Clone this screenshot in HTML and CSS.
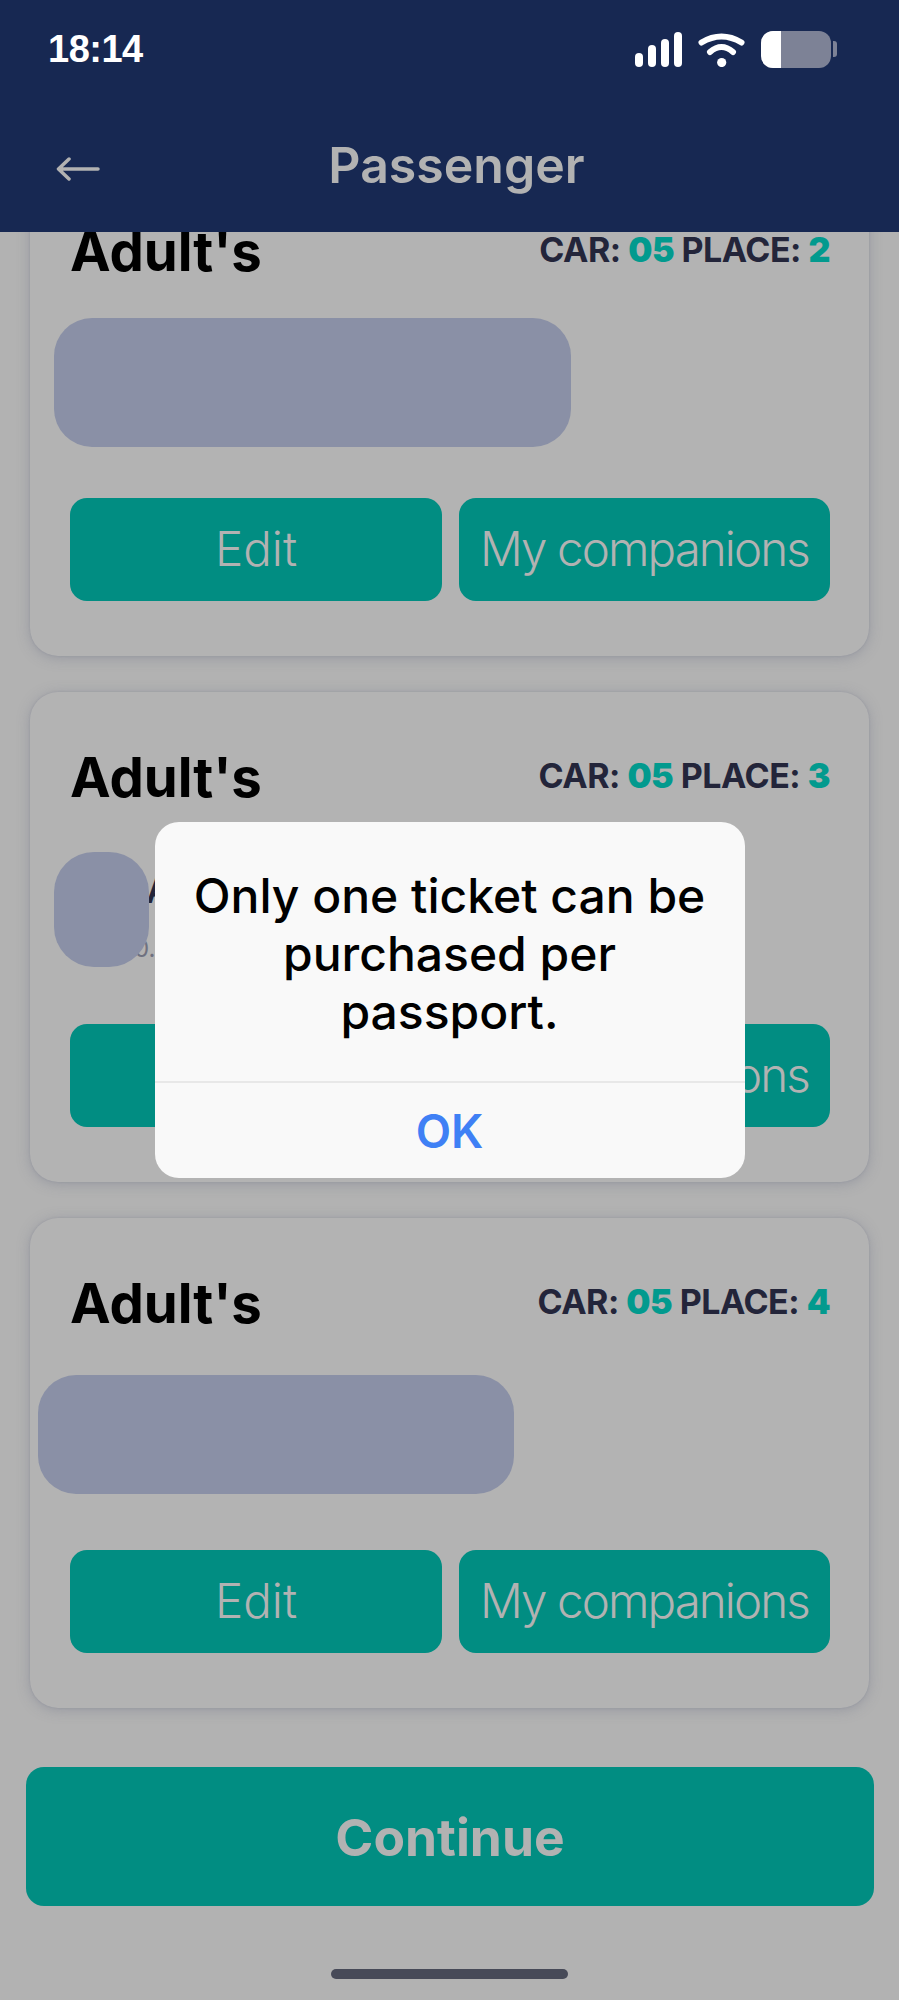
FILE: index.html
```html
<!DOCTYPE html>
<html lang="en">

<head>
  <meta charset="UTF-8">
  <meta name="viewport" content="width=device-width, initial-scale=1.0">
  <title>Passenger</title>
  <link rel="stylesheet" href="styles.css">
</head>

<body>
  <div id="app">
    <header class="top-bar">
      <div class="status-bar">
        <span class="status-time">18:14</span>
        <div class="status-icons">
          <div class="signal">
            <span class="signal-bar signal-bar-1"></span>
            <span class="signal-bar signal-bar-2"></span>
            <span class="signal-bar signal-bar-3"></span>
            <span class="signal-bar signal-bar-4"></span>
          </div>
          <svg class="wifi" width="47" height="35" viewBox="0 0 47 35" fill="none" stroke="#fff" stroke-width="6" stroke-linecap="round">
            <path d="M3.5 10.5Q23.5 -1.5 43.5 10.5"/>
            <path d="M12 20Q23.5 10 35 20"/>
            <circle cx="23.7" cy="30.5" r="4.6" fill="#fff" stroke="none"/>
          </svg>
          <div class="battery">
            <div class="battery-body"><span class="battery-level"></span></div>
            <span class="battery-cap"></span>
          </div>
        </div>
      </div>
      <div class="nav-bar">
        <svg class="back-arrow" width="44" height="24" viewBox="0 0 44 24" fill="none" stroke="#b2b2b2" stroke-width="3.5" stroke-linecap="round" stroke-linejoin="round">
          <path d="M42 12H3M13 2L2.500 12L13 22"/>
        </svg>
        <h1 class="nav-title">Passenger</h1>
      </div>
    </header>

    <main class="scroll-area">
      <div class="card-list">
        <section class="card">
          <div class="card-head">
            <h2 class="card-title">Adult's</h2>
            <p class="seat">CAR: <b>05</b> PLACE: <b>2</b></p>
          </div>
          <div class="passenger"></div>
          <div class="blob blob-wide"></div>
          <div class="card-actions">
            <button class="btn">Edit</button>
            <button class="btn btn-long">My companions</button>
          </div>
        </section>

        <section class="card">
          <div class="card-head">
            <h2 class="card-title">Adult's</h2>
            <p class="seat">CAR: <b>05</b> PLACE: <b>3</b></p>
          </div>
          <div class="passenger">
            <p class="passenger-name">A</p>
            <p class="passenger-doc">0.</p>
          </div>
          <div class="blob blob-small"></div>
          <div class="card-actions">
            <button class="btn">Edit</button>
            <button class="btn btn-long">My companions</button>
          </div>
        </section>

        <section class="card">
          <div class="card-head">
            <h2 class="card-title">Adult's</h2>
            <p class="seat">CAR: <b>05</b> PLACE: <b>4</b></p>
          </div>
          <div class="passenger"></div>
          <div class="blob blob-mid"></div>
          <div class="card-actions">
            <button class="btn">Edit</button>
            <button class="btn btn-long">My companions</button>
          </div>
        </section>
      </div>

      <button class="btn-continue">Continue</button>
      <div class="home-indicator"></div>
    </main>

    <div class="dialog-layer">
      <div class="dialog">
        <p class="dialog-text">Only one ticket can be purchased per passport.</p>
        <button class="dialog-ok">OK</button>
      </div>
    </div>
  </div>
</body>

</html>
```

FILE: styles.css
```css
* {
  box-sizing: border-box;
}

body {
  margin: 0;
  background-color: #b2b2b2;
  font-family: 'Inter', 'Noto Sans', sans-serif;
  font-optical-sizing: none;
}

p,
h1,
h2 {
  margin: 0;
}

button {
  border: none;
  font-family: inherit;
  padding: 0;
}

#app {
  position: relative;
  width: 899px;
  height: 2000px;
  overflow: hidden;
  display: flex;
  flex-direction: column;
}

/* header */
.top-bar {
  position: relative;
  z-index: 2;
  height: 232px;
  flex-shrink: 0;
  background-color: #172852;
  padding: 30px 62px 0 48px;
}

.status-bar {
  display: flex;
  justify-content: space-between;
  align-items: center;
  height: 38px;
}

.status-time {
  color: #fff;
  font-family: 'Liberation Sans', sans-serif;
  font-size: 38px;
  font-weight: 700;
  letter-spacing: -0.5px;
}

.status-icons {
  display: flex;
  align-items: center;
  gap: 16px;
}

.signal {
  display: flex;
  align-items: flex-end;
  gap: 5px;
  height: 35px;
}

.signal-bar {
  width: 8px;
  background-color: #fff;
  border-radius: 4px;
}

.signal-bar-1 {
  height: 14px;
}

.signal-bar-2 {
  height: 22px;
}

.signal-bar-3 {
  height: 28px;
}

.signal-bar-4 {
  height: 35px;
}

.battery {
  display: flex;
  align-items: center;
  gap: 2px;
}

.battery-body {
  width: 70px;
  height: 37px;
  background-color: #7d8296;
  border-radius: 12px;
  overflow: hidden;
}

.battery-level {
  display: block;
  width: 20px;
  height: 100%;
  background-color: #fff;
}

.battery-cap {
  width: 4px;
  height: 16px;
  background-color: #7d8296;
  border-radius: 0 3px 3px 0;
}

.nav-bar {
  position: relative;
  display: flex;
  justify-content: center;
  align-items: center;
  height: 66px;
  margin-top: 64px;
}

.back-arrow {
  position: absolute;
  left: 8px;
  top: 25px;
}

.nav-title {
  color: #b2b2b2;
  font-size: 50px;
  font-weight: 600;
  margin-left: 28px;
}

/* passenger cards */
.scroll-area {
  flex: 1;
  padding: 0 25px 0 26px;
}

.card-list {
  display: flex;
  flex-direction: column;
  gap: 36px;
  margin: -66px 0 0 4px;
  width: 839px;
}

.card {
  position: relative;
  height: 490px;
  padding: 55px 39px 55px 40px;
  background-color: #b3b3b3;
  border-radius: 28px;
  box-shadow: 0 0 2px rgba(110, 114, 135, 0.3), 0 2px 13px rgba(110, 114, 135, 0.4);
  display: flex;
  flex-direction: column;
}

.card-head {
  display: flex;
  justify-content: space-between;
  align-items: center;
  height: 60px;
}

.card-title {
  color: #000;
  font-size: 54.500px;
  font-weight: 700;
  line-height: 60px;
}

.seat {
  color: #23253a;
  font-size: 34px;
  font-weight: 700;
  line-height: 40px;
  letter-spacing: -0.5px;
  margin-top: -3px;
}

.seat b {
  color: #029a8e;
}

.passenger {
  flex: 1;
  padding-top: 65px;
}

.passenger-name {
  color: #23253a;
  font-size: 34px;
  font-weight: 600;
  line-height: 38px;
  margin-left: 76px;
}

.passenger-doc {
  color: #6f7180;
  font-size: 24px;
  line-height: 26px;
  margin: 26px 0 0 64px;
}

.card-actions {
  display: grid;
  grid-template-columns: 372px 371px;
  gap: 17px;
}

.btn {
  height: 103.500px;
  padding-bottom: 2px;
  background-color: #018d82;
  border-radius: 17px;
  color: #b2b2b2;
  font-size: 47.500px;
  font-weight: 300;
}

.btn-long {
  letter-spacing: -1.900px;
}

/* grey boxes that hide the passenger details */
.blob {
  position: absolute;
  background-color: #8a90a6;
}

.blob-wide {
  left: 24px;
  top: 152px;
  width: 517px;
  height: 129px;
  border-radius: 38px;
}

.blob-small {
  left: 24px;
  top: 160px;
  width: 95px;
  height: 115px;
  border-radius: 40px;
}

.blob-mid {
  left: 8px;
  top: 157px;
  width: 476px;
  height: 119px;
  border-radius: 38px;
}

/* bottom */
.btn-continue {
  display: block;
  width: 848px;
  height: 139px;
  margin-top: 59px;
  background-color: #018d82;
  border-radius: 18px;
  color: #b2b2b2;
  font-size: 51.500px;
  font-weight: 700;
}

.home-indicator {
  width: 237px;
  height: 10px;
  margin: 63px auto 0;
  background-color: #474a58;
  border-radius: 5px;
  transform: translateX(-1px);
}

/* alert */
.dialog-layer {
  position: absolute;
  inset: 0;
  z-index: 3;
  display: flex;
  align-items: center;
  justify-content: center;
}

.dialog {
  width: 590px;
  height: 356px;
  background-color: #f9f9f9;
  border-radius: 24px;
  display: flex;
  flex-direction: column;
  overflow: hidden;
}

.dialog-text {
  height: 259px;
  padding: 45px 30px 0;
  color: #000;
  font-size: 48px;
  font-weight: 500;
  line-height: 58px;
  text-align: center;
}

.dialog-ok {
  flex: 1;
  border-top: 2px solid #e8e8e8;
  background: none;
  color: #3f80f5;
  font-size: 46px;
  font-weight: 600;
}
```
